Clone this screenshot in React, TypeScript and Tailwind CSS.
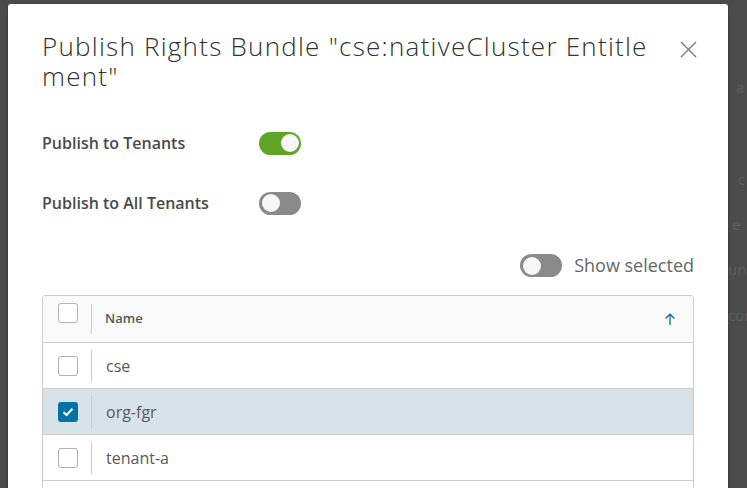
import React from "react";

const font = { fontFamily: '"Open Sans", "Liberation Sans", sans-serif' };

function Toggle({ on }: { on: boolean }) {
  return (
    <div
      className={
        "w-[42px] h-[23px] rounded-full flex items-center px-[2.5px] " +
        (on ? "bg-[#5fa424] justify-end" : "bg-[#8a8a8a] justify-start")
      }
    >
      <div className="w-[18px] h-[18px] rounded-full bg-[#f7f7f7]" />
    </div>
  );
}

function Checkbox({ checked }: { checked?: boolean }) {
  return checked ? (
    <div className="w-[20px] h-[20px] rounded-[3px] bg-[#0072a3] flex items-center justify-center">
      <svg width="12" height="10" viewBox="0 0 12 10">
        <path d="M1.5 5.2 L4.6 8 L10.5 1.8" stroke="#fff" strokeWidth="2" fill="none" />
      </svg>
    </div>
  ) : (
    <div className="w-[20px] h-[20px] rounded-[3px] border border-[#b3b3b3] bg-white" />
  );
}

function Row({ name, checked }: { name: string; checked?: boolean }) {
  return (
    <div
      className={
        "h-[46px] flex items-center border-t border-[#cccccc] " +
        (checked ? "bg-[#d8e3e9]" : "bg-white")
      }
    >
      <div className="w-[48px] flex justify-center pl-[1px]">
        <Checkbox checked={checked} />
      </div>
      <div className="w-px h-[32px] bg-[#cccccc]" />
      <div className="pl-[14px] text-[16px] text-[#5a5a5a]">{name}</div>
    </div>
  );
}

export default function App() {
  return (
    <div className="relative w-[747px] h-[488px] overflow-hidden bg-[#4b4b4b]" style={font}>
      <div className="absolute left-[712px] top-[78px] flex flex-col text-[15px] text-[#5f5f5f] leading-[18px] whitespace-nowrap">
        <div className="h-[92px] pl-[24px]">a</div>
        <div className="h-[45px] pl-[26px]">c</div>
        <div className="h-[45px] pl-[20px]">e</div>
        <div className="h-[46px] pl-[16px]">un</div>
        <div className="pl-[16px]">cor</div>
      </div>

      <div className="absolute left-[8px] top-[4px] w-[720px] h-[540px] bg-white rounded-[3px] shadow-[0_1px_3px_rgba(0,0,0,0.4)] pl-[34px] pr-[34px] pt-[27px]">
        <div className="flex items-start">
          <h3 className="w-[616px] shrink-0 text-[26px] leading-[30px] font-light tracking-[1.25px] text-[#313131] break-all">
            Publish Rights Bundle "cse:nativeCluster Entitlement"
          </h3>
          <div className="flex-1 flex justify-end pt-[10px]">
            <svg width="17" height="17" viewBox="0 0 17 17" className="mr-[-3px]">
              <path d="M1 1 L16 16 M16 1 L1 16" stroke="#7a7a7a" strokeWidth="1.4" />
            </svg>
          </div>
        </div>

        <div className="mt-[40px] flex items-center h-[24px]">
          <div className="w-[217px] text-[16px] font-semibold text-[#4a4a4a]">Publish to Tenants</div>
          <Toggle on />
        </div>
        <div className="mt-[36px] flex items-center h-[24px]">
          <div className="w-[217px] text-[16px] font-semibold text-[#4a4a4a]">Publish to All Tenants</div>
          <Toggle on={false} />
        </div>

        <div className="mt-[37px] flex items-center justify-end gap-[12px]">
          <Toggle on={false} />
          <div className="text-[18px] text-[#666666]">Show selected</div>
        </div>

        <div className="mt-[16px] w-[652px] border border-[#cccccc] rounded-[3px] overflow-hidden">
          <div className="h-[46px] flex items-start bg-[#fafafa]">
            <div className="w-[48px] flex justify-center pl-[1px] pt-[7px]">
              <Checkbox />
            </div>
            <div className="w-px h-[30px] mt-[8px] bg-[#cccccc]" />
            <div className="pl-[13px] pt-[13px] text-[13px] font-semibold text-[#565656]">Name</div>
            <div className="flex-1 flex justify-end pr-[17px] pt-[17px]">
              <svg width="12" height="12" viewBox="0 0 12 12">
                <path d="M6 12 V1.5 M1.5 5.5 L6 1.2 L10.5 5.5" stroke="#0072a3" strokeWidth="1.3" fill="none" />
              </svg>
            </div>
          </div>
          <Row name="cse" />
          <Row name="org-fgr" checked />
          <Row name="tenant-a" />
          <Row name="" />
        </div>
      </div>
    </div>
  );
}
